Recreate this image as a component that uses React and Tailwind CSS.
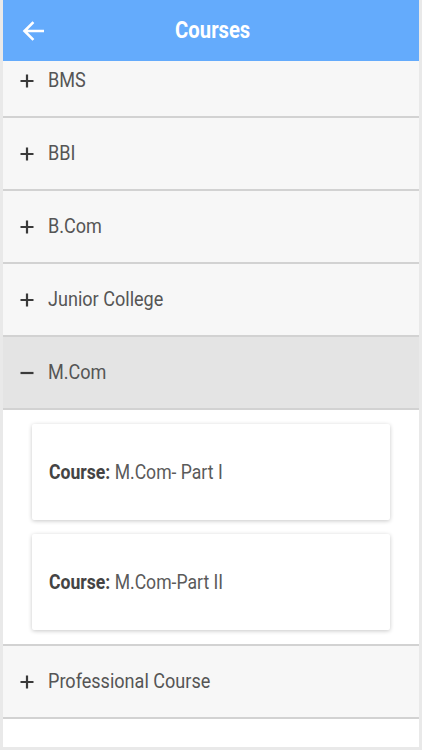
import React from "react";

const font = { fontFamily: "Roboto, 'Noto Sans', sans-serif" };

function Plus() {
  return (
    <svg width="14" height="14" viewBox="0 0 14 14" className="shrink-0">
      <path d="M7 0.5v13M0.5 7h13" stroke="#3a3a3a" strokeWidth="2.2" fill="none" />
    </svg>
  );
}
function Minus() {
  return (
    <svg width="14" height="14" viewBox="0 0 14 14" className="shrink-0">
      <path d="M0.5 7h13" stroke="#3a3a3a" strokeWidth="2.2" fill="none" />
    </svg>
  );
}

function Row({ label, open, first }) {
  return (
    <div
      className={`flex items-center h-[73px] border-b-2 border-[#d2d2d2] pl-[17px] gap-[14px] ${
        open ? "bg-[#e4e4e4]" : "bg-[#f7f7f7]"
      } ${first ? "-mt-[16px]" : ""}`}
    >
      {open ? <Minus /> : <Plus />}
      <span className="text-[21px] text-[#555] leading-none whitespace-nowrap origin-left scale-x-[0.86] inline-block">
        {label}
      </span>
    </div>
  );
}

function Card({ text }) {
  return (
    <div className="bg-white rounded-[2px] h-[96px] flex items-center pl-[17px] shadow-[0_1px_4px_rgba(0,0,0,0.22)]">
      <span className="text-[20px] leading-none whitespace-nowrap origin-left scale-x-[0.88] inline-block">
        <span className="font-bold text-[#444]">Course:</span>
        <span className="text-[#5a5a5a]"> {text}</span>
      </span>
    </div>
  );
}

export default function App() {
  return (
    <div style={font} className="w-[422px] h-[750px] overflow-hidden bg-[#e9e9e9] px-[3px] pb-[3px] flex flex-col">
      <div className="h-[61px] bg-[#64abfc] flex items-center justify-center relative shrink-0">
        <svg width="22" height="20" viewBox="0 0 22 20" className="absolute left-[19px] top-[21px]">
          <path d="M21 10H3M10.5 2L2.5 10l8 8" stroke="white" strokeWidth="2.6" fill="none" strokeLinecap="square" />
        </svg>
        <div className="text-white font-bold text-[23px] leading-none scale-x-[0.88] inline-block ml-[4px]">Courses</div>
      </div>
      <div className="flex-1 overflow-hidden bg-white">
        <Row label="BMS" first />
        <Row label="BBI" />
        <Row label="B.Com" />
        <Row label="Junior College" />
        <Row label="M.Com" open />
        <div className="bg-white px-[29px] pt-[14px] pb-[14px] flex flex-col gap-[14px] border-b-2 border-[#d2d2d2]">
          <Card text="M.Com- Part I" />
          <Card text="M.Com-Part II" />
        </div>
        <Row label="Professional Course" />
      </div>
    </div>
  );
}
